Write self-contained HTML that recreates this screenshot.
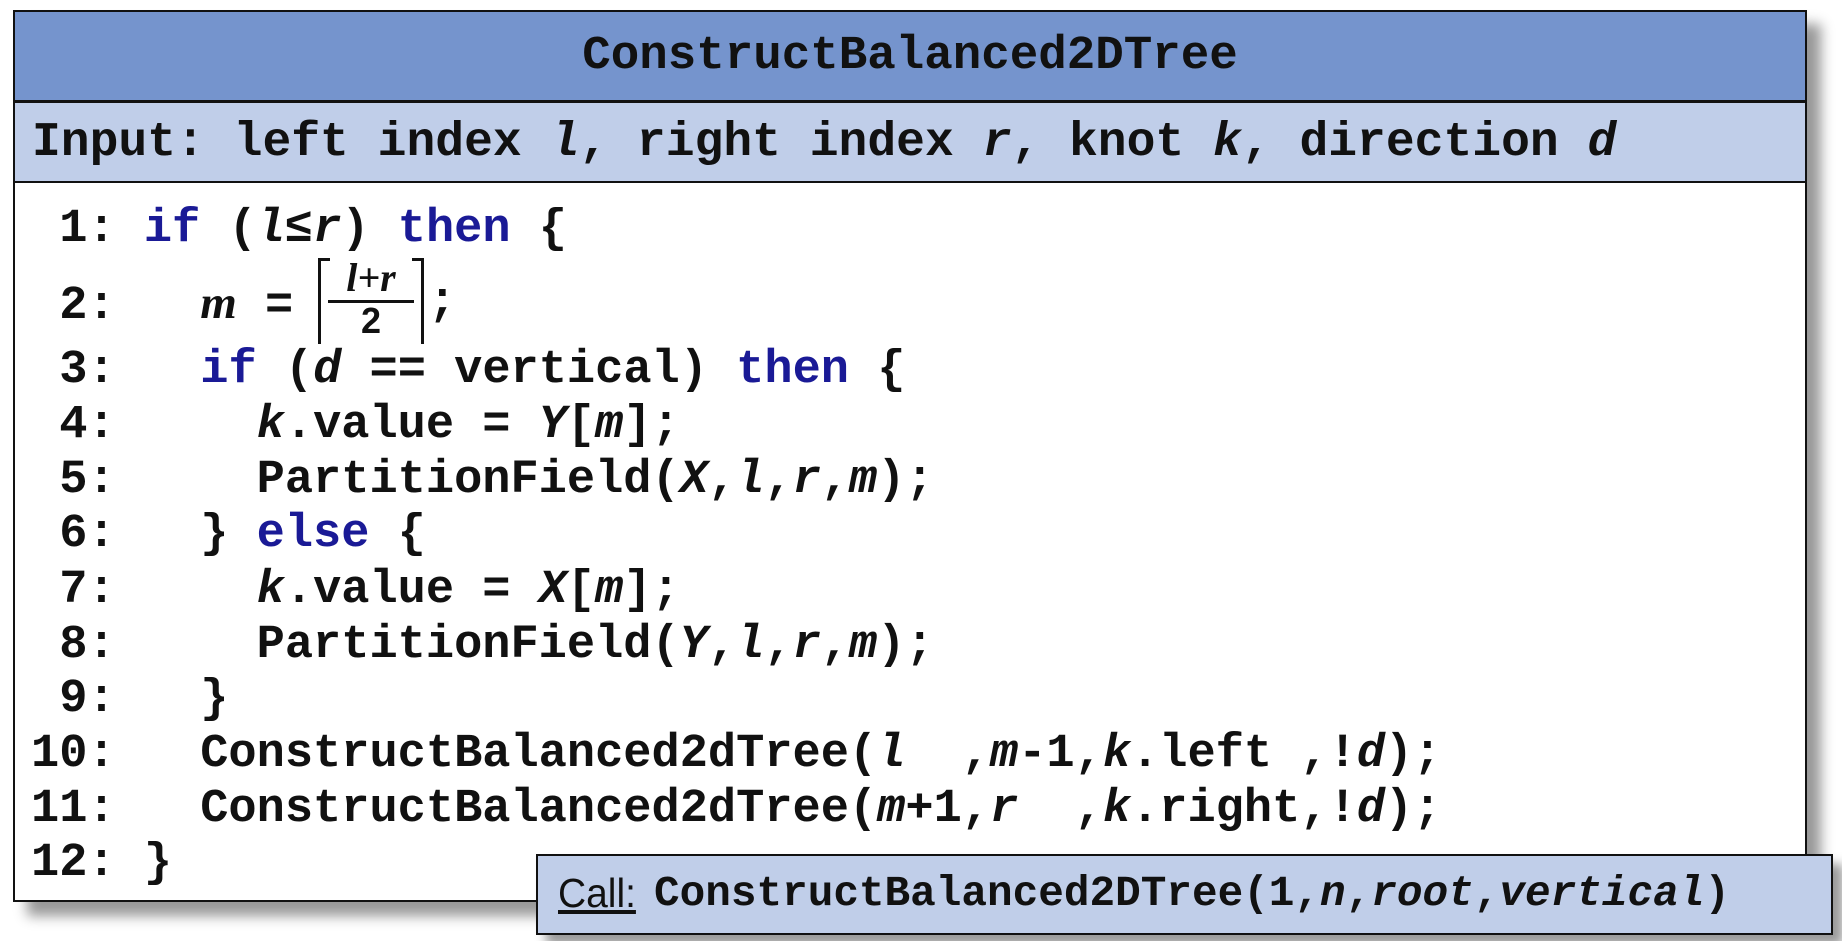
<!DOCTYPE html>
<html><head><meta charset="utf-8"><style>
html,body{margin:0;padding:0;background:#fff;width:1842px;height:941px;overflow:hidden;position:relative}
.box{position:absolute;left:13px;top:10px;width:1790px;height:888px;border:2px solid #111;background:#fff;box-shadow:14px 14px 12px #999}
.title{position:absolute;left:0;top:0;width:1790px;height:88px;background:#7594cd;border-bottom:3px solid #111;text-align:center;font:bold 47.5px/88px "Liberation Mono",monospace;color:#111}
.input{position:absolute;left:0;top:91px;width:1790px;box-sizing:border-box;height:80px;background:#c0cee9;border-bottom:2px solid #111;font:bold 48px/80px "Liberation Mono",monospace;color:#111;padding-left:17px;white-space:pre}
.ln{position:absolute;left:31px;font:bold 47px "Liberation Mono",monospace;color:#111;white-space:pre;line-height:54px;height:54px}
.kw{color:#1a1a96}
i{font-style:italic}
.sv{font-family:"Liberation Serif",serif;font-style:italic;font-weight:bold}
.call{position:absolute;left:536px;top:854px;width:1293px;height:77px;background:#c0cee9;border:2px solid #111;box-shadow:10px 10px 10px #999;white-space:pre}
.call .lab{position:absolute;left:20px;top:14px;font:41px "Liberation Sans",sans-serif;transform:scaleX(0.95);transform-origin:left;text-decoration:underline;color:#111}
.call .code{position:absolute;left:116px;top:14px;font:bold 42.7px/48px "Liberation Mono",monospace;color:#111}
.frac{position:absolute;left:318px;top:258px;width:100px;height:86px;border-left:3px solid #111;border-right:3px solid #111}
.frac:before,.frac:after{content:"";position:absolute;top:0;width:9px;border-top:3px solid #111}
.frac:before{left:0}.frac:after{right:0}
</style></head><body>
<div class="box">
<div class="title">ConstructBalanced2DTree</div>
<div class="input">Input: left index <i>l</i>, right index <i>r</i>, knot <i>k</i>, direction <i>d</i></div>
</div>
<div class="ln" style="top:203px"> 1: <span class="kw">if</span> (<i>l</i>≤<i>r</i>) <span class="kw">then</span> {</div>
<div class="ln" style="top:276px"> 2:   <span class="sv">m</span> =</div>
<div class="frac"></div>
<div style="position:absolute;left:326px;top:254px;width:90px;text-align:center;font:bold italic 40px 'Liberation Serif',serif;color:#111">l+r</div>
<div style="position:absolute;left:328px;top:300px;width:86px;border-top:3px solid #111"></div>
<div style="position:absolute;left:328px;top:300px;width:86px;text-align:center;font:bold 36px 'Liberation Sans',sans-serif;color:#111">2</div>
<div class="ln" style="top:276px;left:428px">;</div>
<div class="ln" style="top:344px"> 3:   <span class="kw">if</span> (<i>d</i> == vertical) <span class="kw">then</span> {</div>
<div class="ln" style="top:399px"> 4:     <i>k</i>.value = <i>Y</i>[<i>m</i>];</div>
<div class="ln" style="top:454px"> 5:     PartitionField(<i>X</i>,<i>l</i>,<i>r</i>,<i>m</i>);</div>
<div class="ln" style="top:508px"> 6:   } <span class="kw">else</span> {</div>
<div class="ln" style="top:564px"> 7:     <i>k</i>.value = <i>X</i>[<i>m</i>];</div>
<div class="ln" style="top:619px"> 8:     PartitionField(<i>Y</i>,<i>l</i>,<i>r</i>,<i>m</i>);</div>
<div class="ln" style="top:673px"> 9:   }</div>
<div class="ln" style="top:728px">10:   ConstructBalanced2dTree(<i>l</i>  ,<i>m</i>-1,<i>k</i>.left ,!<i>d</i>);</div>
<div class="ln" style="top:783px">11:   ConstructBalanced2dTree(<i>m</i>+1,<i>r</i>  ,<i>k</i>.right,!<i>d</i>);</div>
<div class="ln" style="top:837px">12: }</div>
<div class="call"><span class="lab">Call:</span><span class="code">ConstructBalanced2DTree(1,<i>n</i>,<i>root</i>,<i>vertical</i>)</span></div>
</body></html>
